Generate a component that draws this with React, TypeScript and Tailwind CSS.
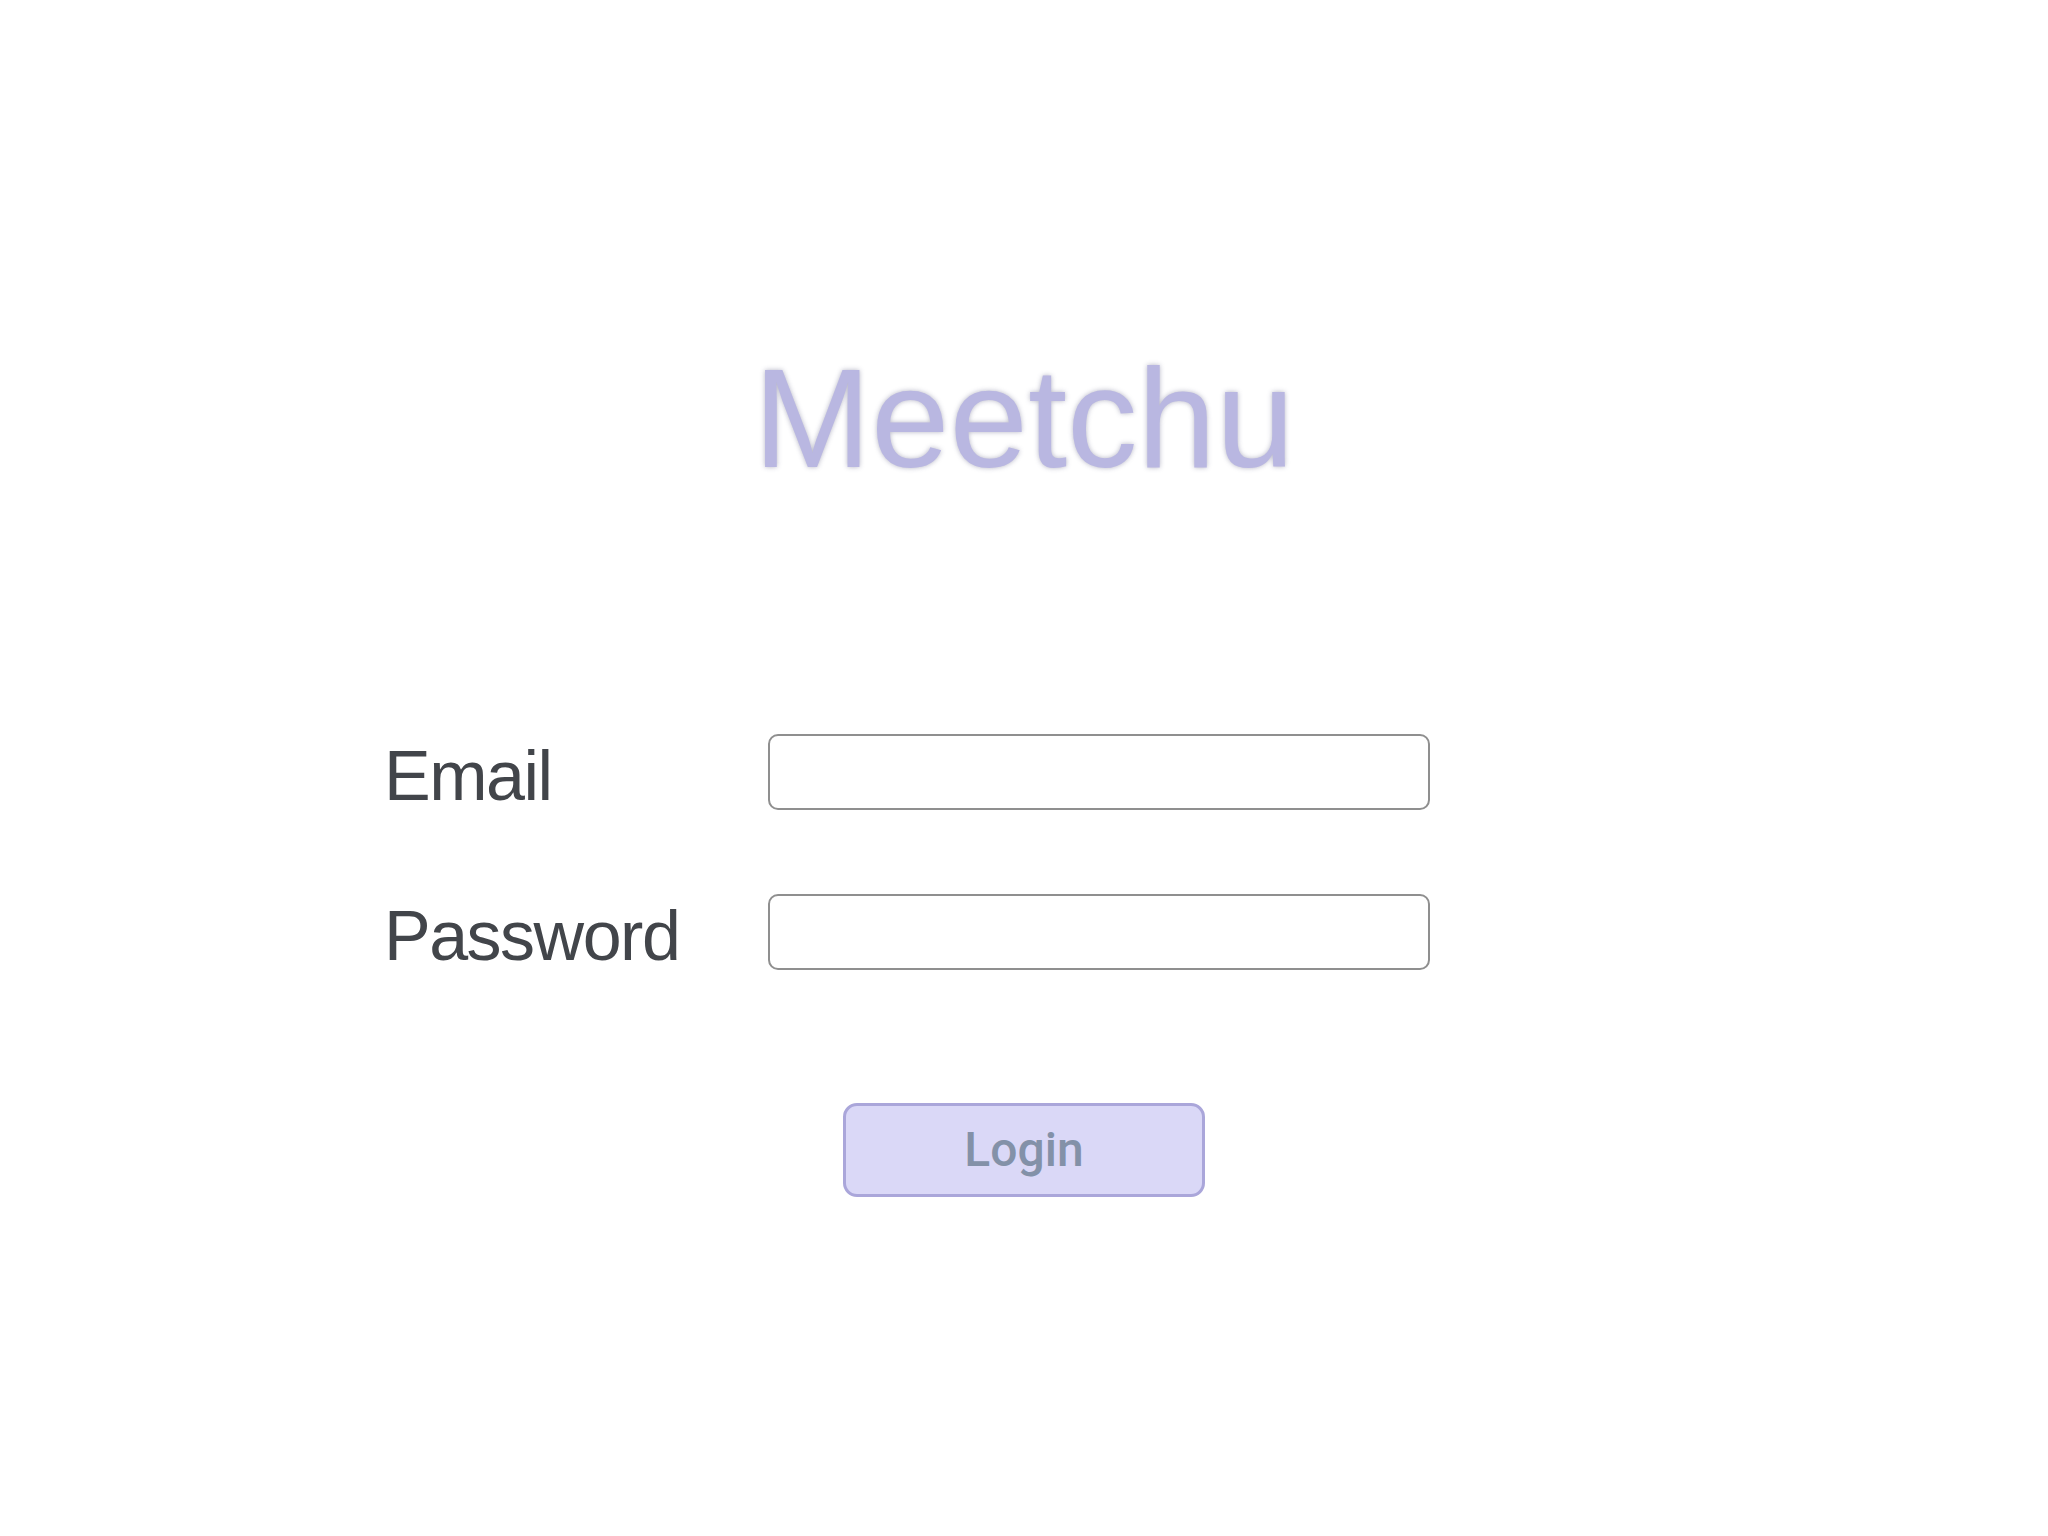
export default function App() {
  const fields = [
    { label: 'Email', type: 'email' },
    { label: 'Password', type: 'password' },
  ]

  return (
    <div className="min-h-screen w-full bg-white font-['Liberation_Sans',Arial,sans-serif]">
      <div className="flex flex-col items-center pt-[348px]">
        <h1 className="text-[141px] leading-none font-normal text-[#b9b7e1] [text-shadow:0_0_5px_rgba(70,70,110,0.4)]">
          Meetchu
        </h1>

        {/* login form */}
        <form className="mt-[245px] flex flex-col gap-[84px] self-stretch pl-[384px]">
          {fields.map((field) => (
            <div key={field.label} className="flex h-[76px] items-center">
              <label className="w-[384px] pt-[8px] text-[70px] leading-none tracking-[-1.5px] text-[#42454a]">
                {field.label}
              </label>
              <input
                type={field.type}
                className="h-[76px] w-[662px] rounded-[10px] border-2 border-[#8f8f8f] bg-white px-4 text-[32px] outline-none"
              />
            </div>
          ))}
        </form>

        <button
          type="button"
          className="mt-[133px] flex h-[94px] w-[362px] items-center justify-center rounded-[14px] border-[3px] border-[#aaa6da] bg-[#dad8f7] font-['Roboto',sans-serif] text-[48px] leading-none font-medium text-[#8391a8]"
        >
          Login
        </button>
      </div>
    </div>
  )
}
